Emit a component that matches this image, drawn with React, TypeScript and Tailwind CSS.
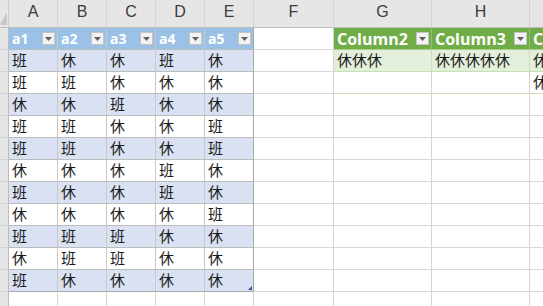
import React from "react";

const cols = [
  { key: "A", w: "w-[49px]" },
  { key: "B", w: "w-[49px]" },
  { key: "C", w: "w-[49px]" },
  { key: "D", w: "w-[49px]" },
  { key: "E", w: "w-[49px]" },
  { key: "F", w: "w-[80px]" },
  { key: "G", w: "w-[98px]" },
  { key: "H", w: "w-[98px]" },
  { key: "I", w: "w-[98px]" },
];

const data = [
  "班休休班休",
  "班班休休休",
  "休休班休休",
  "班班休休班",
  "班班休休班",
  "休休休班休",
  "班休休班休",
  "休休休休班",
  "班班班休休",
  "休班班休休",
  "班休休休休",
];

const cjk = "font-['Noto_Sans_CJK_SC','Noto_Sans',sans-serif]";

function Drop() {
  return (
    <span className="flex h-[13px] w-[13px] shrink-0 items-center justify-center border border-[#c4c4c4] bg-[#f3f3f3]">
      <svg width="7" height="4" viewBox="0 0 7 4">
        <polygon points="0,0 7,0 3.5,4" fill="#5f5f5f" />
      </svg>
    </span>
  );
}

function Cell({
  w,
  className = "",
  children,
}: {
  w: string;
  className?: string;
  children?: React.ReactNode;
}) {
  return (
    <div
      className={`${w} flex h-[22px] shrink-0 items-center overflow-hidden whitespace-nowrap border-b border-r pl-[3px] ${className}`}
    >
      {children}
    </div>
  );
}

export default function App() {
  const green: Record<string, string[]> = {
    G: ["Column2", "休休休", ""],
    H: ["Column3", "休休休休休", ""],
    I: ["Column4", "休休", "休"],
  };

  return (
    <div className="h-[306px] w-[543px] overflow-hidden bg-white text-[#1b1b1b]">
      {/* column letters */}
      <div className="flex h-[28px] bg-[#e6e6e6]">
        <div className="relative w-[9px] shrink-0 border-b border-r border-b-[#bdbdbd] border-r-[#cfcfcf]">
          <svg className="absolute left-0 top-[12px]" width="7" height="13" viewBox="0 0 7 13">
            <polygon points="7,0 7,13 0,13" fill="#c9c9c9" />
          </svg>
        </div>
        {cols.map((c) => (
          <div
            key={c.key}
            className={`${c.w} flex shrink-0 items-end justify-center border-b border-r border-b-[#bdbdbd] border-r-[#d4d4d4] pb-[3px] font-['Liberation_Sans',sans-serif] text-[16px] text-[#3c3c3c]`}
          >
            {c.key}
          </div>
        ))}
      </div>

      {Array.from({ length: 13 }).map((_, r) => (
        <div key={r} className="flex">
          <div className="h-[22px] w-[9px] shrink-0 border-b border-r border-b-[#d4d4d4] border-r-[#bdbdbd] bg-[#e6e6e6]" />
          {cols.map((c, ci) => {
            // blue table: A-E, rows 0..11
            if (ci < 5 && r <= 11) {
              const edge = ci === 4 ? "border-r-[#a9a9a9]" : "border-r-[#c8c8c8]";
              const bottom = r === 11 ? "border-b-[#a9a9a9]" : "border-b-[#bcbcbc]";
              if (r === 0) {
                return (
                  <Cell
                    key={c.key}
                    w={c.w}
                    className={`justify-between bg-[#9bc2e6] pr-[2px] font-['Open_Sans',sans-serif] text-[14px] font-bold text-white ${edge} border-b-[#bcbcbc]`}
                  >
                    <span>a{ci + 1}</span>
                    <Drop />
                  </Cell>
                );
              }
              const band = r % 2 === 1 ? "bg-[#d9e1f2]" : "bg-white";
              return (
                <Cell
                  key={c.key}
                  w={c.w}
                  className={`relative ${band} ${cjk} text-[15px] ${edge} ${bottom}`}
                >
                  {data[r - 1][ci]}
                  {r === 11 && ci === 4 && (
                    <svg className="absolute bottom-[1px] right-[1px]" width="4" height="4" viewBox="0 0 4 4">
                      <polygon points="4,0 4,4 0,4" fill="#2f4f9f" />
                    </svg>
                  )}
                </Cell>
              );
            }
            // green table: G-I, rows 0..2
            if (ci >= 6 && r <= 2) {
              const txt = green[c.key][r];
              if (r === 0) {
                return (
                  <Cell
                    key={c.key}
                    w={c.w}
                    className="justify-between bg-[#70ad47] pr-[2px] font-['Open_Sans',sans-serif] text-[16px] font-bold text-white border-b-[#a9d08e] border-r-[#8fc06c]"
                  >
                    <span>{txt}</span>
                    <Drop />
                  </Cell>
                );
              }
              return (
                <Cell
                  key={c.key}
                  w={c.w}
                  className={`${r === 1 ? "bg-[#e2efda]" : "bg-white"} ${cjk} text-[15px] border-b-[#c6e0b4] border-r-[#d4d4d4]`}
                >
                  {txt}
                </Cell>
              );
            }
            return <Cell key={c.key} w={c.w} className="border-b-[#d9d9d9] border-r-[#d4d4d4]" />;
          })}
        </div>
      ))}
    </div>
  );
}
